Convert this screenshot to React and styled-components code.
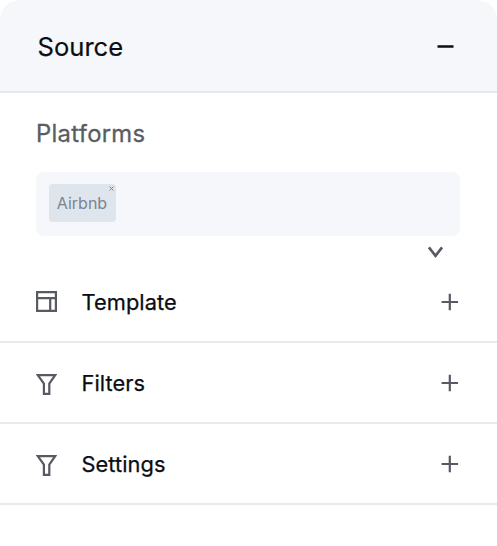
import { createGlobalStyle, styled } from "styled-components";

const GlobalStyle = createGlobalStyle`
  * {
    box-sizing: border-box;
  }

  body {
    margin: 0;
    background: #ffffff;
    font-family: "Inter", sans-serif;
  }
`;

const Panel = styled.section`
  width: 100%;
  min-height: 546px;
  overflow: hidden;
  background: #ffffff;
  border-radius: 20px 20px 0 0;
`;

const Header = styled.header`
  display: flex;
  align-items: center;
  justify-content: space-between;
  height: 93px;
  padding: 2px 43.5px 0 37.5px;
  background: #f5f7fb;
  border-bottom: 2px solid #e7e8ea;
`;

const Title = styled.h1`
  margin: 0;
  padding-top: 1px;
  color: #0b0d12;
  font-size: 25.6px;
  font-weight: 400;
  line-height: 32px;
  -webkit-text-stroke: 0.2px currentColor;
`;

const Platforms = styled.div`
  display: flex;
  flex-direction: column;
  height: 169px;
  padding: 25px 37px 0 36px;
`;

const Label = styled.h2`
  margin: 0;
  color: #5a5c63;
  font-size: 23.8px;
  font-weight: 400;
  line-height: 32px;
  letter-spacing: 0.3px;
  -webkit-text-stroke: 0.3px currentColor;
`;

const Field = styled.div`
  display: flex;
  align-items: center;
  height: 64px;
  margin-top: 22px;
  padding: 0 13px;
  background: #f5f7fb;
  border-radius: 8px;
`;

const Tag = styled.span`
  position: relative;
  display: flex;
  align-items: center;
  justify-content: center;
  width: 67px;
  height: 38px;
  margin-bottom: 1.5px;
  padding-right: 1px;
  background: #dfe5ec;
  border-radius: 4px;
  color: #7c8490;
  font-size: 16px;
`;

// sits in the corner of the tag
const TagClose = styled.svg`
  position: absolute;
  top: 2px;
  right: 2px;
`;

const Dropdown = styled.div`
  display: flex;
  justify-content: flex-end;
  padding: 10px 16px 0 0;
`;

const Row = styled.div`
  display: flex;
  align-items: center;
  height: 81px;
  padding: ${({ $shift }) => $shift}px 38px 0 36px;
  border-bottom: 2px solid #e8e9eb;
`;

const RowLabel = styled.span`
  flex: 1;
  margin-left: 24.5px;
  padding-top: 0.2px;
  color: #0b0d12;
  font-size: 21.8px;
  font-weight: 400;
  line-height: 28px;
  letter-spacing: 0.08px;
  -webkit-text-stroke: 0.25px currentColor;
`;

const Icon = styled.svg`
  display: block;
  flex-shrink: 0;
  fill: none;
  stroke: ${({ $color }) => $color || "#575963"};
  stroke-width: ${({ $weight }) => $weight || 2};
`;

function TemplateIcon() {
  return (
    <Icon width="21" height="21" viewBox="0 0 21 21" $weight={2.2}>
      <path d="M1.1 1.1H19.9V19.9H1.1ZM1.1 7.2H19.9M14.2 7.2V20" />
    </Icon>
  );
}

function FilterIcon() {
  return (
    <Icon width="21" height="24" viewBox="0 0 21 24" $weight={2.2}>
      <path d="M1.8 4.1H19.2L13.3 12.5V22.9H7.9V12.5Z" />
    </Icon>
  );
}

function PlusIcon() {
  return (
    <Icon width="18" height="18" viewBox="0 0 18 18" $weight={2.2}>
      <path d="M.6 9H17.1M8.8 .7V17.2" />
    </Icon>
  );
}

const rows = [
  { label: "Template", icon: TemplateIcon, shift: 0 },
  { label: "Filters", icon: FilterIcon, shift: 0.9 },
  { label: "Settings", icon: FilterIcon, shift: 1.6 },
];

function App() {
  return (
    <>
      <GlobalStyle />
      <Panel>
        <Header>
          <Title>Source</Title>
          <Icon
            $color="#0b0d12"
            $weight={2.4}
            width="17"
            height="3"
            viewBox="0 0 17 3"
          >
            <path d="M.5 1.5H16.5" />
          </Icon>
        </Header>
        <Platforms>
          <Label>Platforms</Label>
          <Field>
            <Tag>
              Airbnb
              <TagClose width="5" height="5" viewBox="0 0 5 5">
                <path d="M.5 .5L4.5 4.5M4.5 .5L.5 4.5" stroke="#7c8490" />
              </TagClose>
            </Tag>
          </Field>
          <Dropdown>
            <Icon width="17" height="13" viewBox="0 0 17 13" $weight={2.6}>
              <path d="M1.9 1.4L8.5 9.8L15.1 1.4" />
            </Icon>
          </Dropdown>
        </Platforms>
        {rows.map(({ label, icon: RowIcon, shift }) => (
          <Row key={label} $shift={shift}>
            <RowIcon />
            <RowLabel>{label}</RowLabel>
            <PlusIcon />
          </Row>
        ))}
      </Panel>
    </>
  );
}

export default App;
